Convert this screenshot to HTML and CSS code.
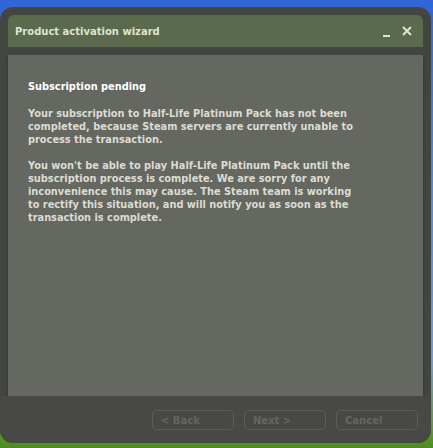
FILE: index.html
```html
<!DOCTYPE html>
<html lang="en">
<head>
  <meta charset="UTF-8" />
  <title>Product activation wizard</title>
  <link rel="stylesheet" href="styles.css">
</head>
<body>

  <div id="wizard">
    <div class="titlebar">
      <span class="title">Product activation wizard</span>
      <span class="controls">
        <span class="minimize"></span>
        <svg class="close" width="10" height="10" viewBox="0 0 10 10">
          <path d="M1 1 L9 9 M9 1 L1 9" stroke="#dfe3d2" stroke-width="2" />
        </svg>
      </span>
    </div>

    <main class="panel">
      <h3>Subscription pending</h3>
      <p>Your subscription to Half-Life Platinum Pack has not been completed, because Steam servers are currently unable to process the transaction.</p>
      <p>You won't be able to play Half-Life Platinum Pack until the subscription process is complete. We are sorry for any inconvenience this may cause. The Steam team is working to rectify this situation, and will notify you as soon as the transaction is complete.</p>
    </main>

    <div class="footer">
      <button class="button" disabled>&lt; Back</button>
      <button class="button" disabled>Next &gt;</button>
      <button class="button" disabled>Cancel</button>
    </div>
  </div>

</body>
</html>
```

FILE: styles.css
```css
/* Steam-style wizard over an XP desktop */
html, body {
  margin: 0; padding: 0;
  height: 100%;
  overflow: hidden;
}
body {
  background: linear-gradient(to bottom, #3165d8 0%, #4f86e0 40%, #6c9be0 80%, #5d9a2e 96%, #4f8a22 100%);
  font-family: 'DejaVu Sans', Verdana, sans-serif;
  padding-top: 7px;
  box-sizing: border-box;
}
#wizard {
  width: 431px;
  height: 436px;
  background-color: #434640;
  border-radius: 13px;
  padding: 8px 8px 0 8px;
  box-sizing: border-box;
  display: flex;
  flex-direction: column;
}
.titlebar {
  height: 32px;
  background-color: #5b6a4c;
  border-radius: 6px 6px 0 0;
  display: flex;
  align-items: center;
  justify-content: space-between;
  padding: 0 11px 0 7px;
  color: #dfe3d2;
  font-weight: bold;
  font-size: 10px;
  user-select: none;
}
.controls {
  display: flex;
  align-items: center;
  gap: 12px;
}
.minimize {
  width: 7px;
  height: 2px;
  background-color: #dfe3d2;
  margin-top: 9px;
}
.panel {
  margin-top: 8px;
  height: 341px;
  background-color: #656761;
  padding: 25px 60px 0 20px;
  box-sizing: border-box;
  color: #dcdcd2;
  font-size: 9.8px;
  font-weight: bold;
  line-height: 13px;
  box-shadow: 0 2px 3px rgba(0, 0, 0, 0.35);
}
.panel h3 {
  margin: 0 0 14px 0;
  font-size: 9.8px;
  color: #ffffff;
}
.panel p {
  margin: 0 0 13px 0;
}
.footer {
  flex-grow: 1;
  background-color: #484846;
  margin: 0 -8px;
  border-radius: 0 0 13px 13px;
  display: flex;
  justify-content: flex-end;
  gap: 10px;
  padding: 14px 13px 0 0;
}
.button {
  width: 82px;
  height: 20px;
  background: transparent;
  border: 1.5px solid #5d5e5b;
  border-radius: 5px;
  color: #646562;
  font-family: 'DejaVu Sans', Verdana, sans-serif;
  font-size: 10px;
  font-weight: bold;
  text-align: left;
  padding: 0 8px;
}
```
